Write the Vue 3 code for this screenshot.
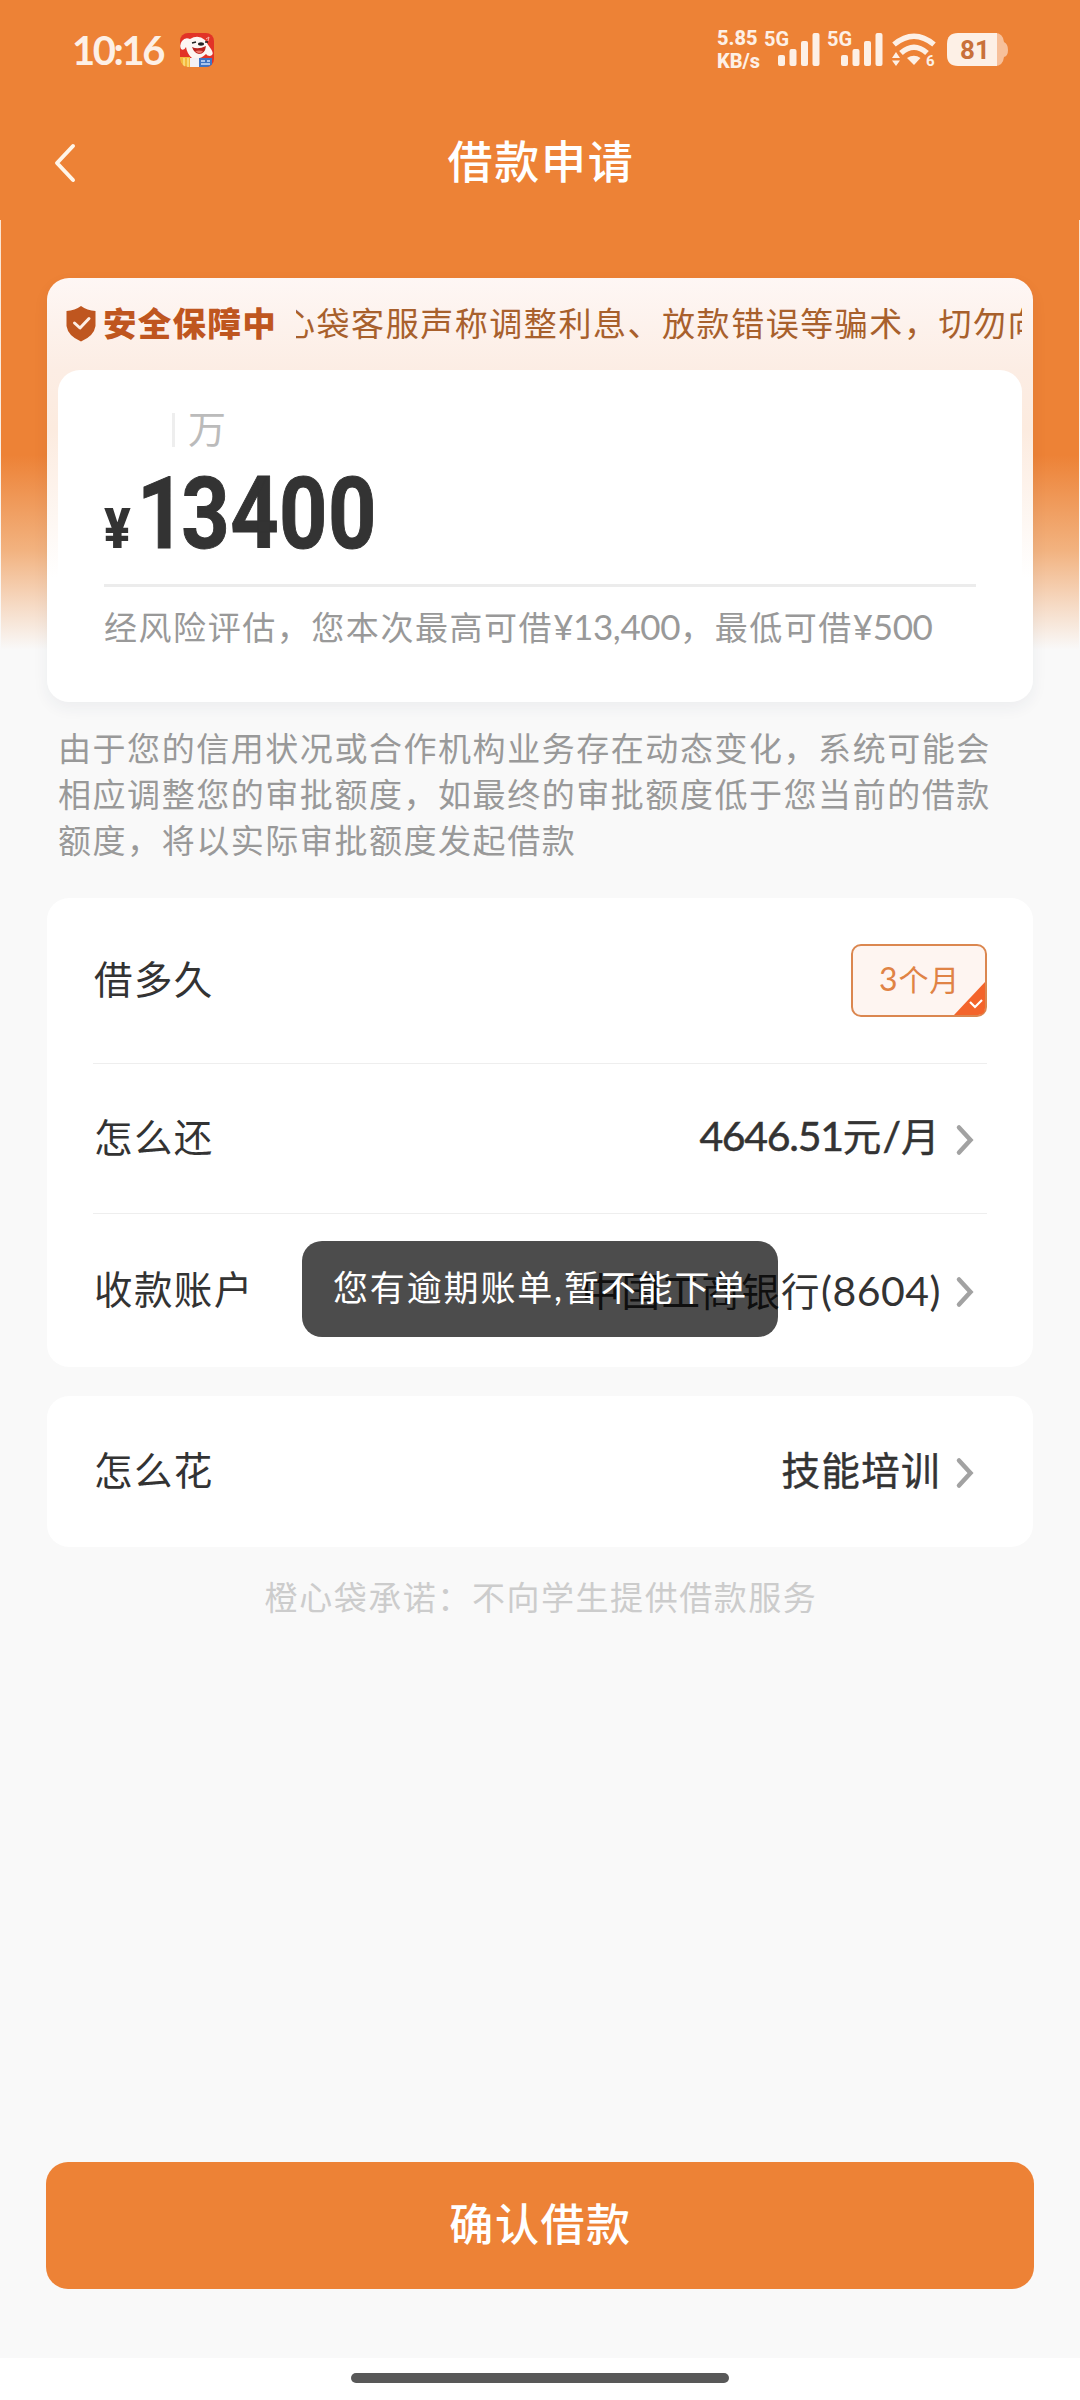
<script setup>
const notice = '心袋客服声称调整利息、放款错误等骗术，切勿向'
const disclaimer = [
  '由于您的信用状况或合作机构业务存在动态变化，系统可能会',
  '相应调整您的审批额度，如最终的审批额度低于您当前的借款',
  '额度，将以实际审批额度发起借款',
]
</script>

<template>
  <div class="page">
    <header class="top">
      <div class="status">
        <span class="clock">10:16</span>
        <svg class="app" width="34" height="34" viewBox="0 0 34 34">
          <defs><clipPath id="appClip"><rect width="34" height="34" rx="8" /></clipPath></defs>
          <g clip-path="url(#appClip)">
            <rect width="34" height="34" fill="#e23327" />
            <path d="M2 8Q5 4 10 6Q18 1 25 7Q28 12 31 16Q35 22 30 23Q27 23 26 21Q20 27 12 25Q7 21 6 14Q4 18 1 16Q-1 12 2 8Z" fill="#fdf6f3" />
            <path d="M12 14Q18 17 26 13Q25 21 19 21Q14 20 12 14Z" fill="#b8231f" />
            <path d="M15 18Q19 17 23 18Q21 21 18 20Z" fill="#ee7668" />
            <ellipse cx="21" cy="11" rx="3" ry="1.7" fill="#222" />
            <path d="M12 10l4-1M25 9l3 0" stroke="#222" stroke-width="1.5" />
            <path d="M26 6l3-2-1 4" stroke="#f5b5a8" fill="none" />
            <rect y="24" width="10" height="10" fill="#f4b93c" />
            <path d="M4 25v9M8 25v9" stroke="#fbe08a" stroke-width="1.5" />
            <rect x="10" y="25" width="9" height="9" fill="#f4f1f5" />
            <rect x="19" y="25" width="13" height="9" fill="#3f74c4" />
            <path d="M21 28h4M27 28h3M21 31h9" stroke="#cfe0fa" stroke-width="1.5" />
          </g>
        </svg>
        <span class="grow"></span>
        <span class="speed"><b>5.85</b><b>KB/s</b></span>
        <span v-for="n in 2" :key="n" class="signal">
          <b>5G</b>
          <svg width="42" height="34" viewBox="0 0 42 34" fill="#fdf0e6">
            <rect x="0" y="22" width="7" height="11" rx="2" />
            <rect x="11.5" y="16" width="7" height="17" rx="2" />
            <rect x="23" y="8" width="7" height="25" rx="2" />
            <rect x="34.5" y="0" width="7" height="33" rx="2" />
          </svg>
        </span>
        <svg class="wifi" width="46" height="34" viewBox="0 0 46 34">
          <g fill="none" stroke="#fdf0e6" stroke-width="5.5">
            <path d="M3 11.5Q23-5 43 11.5" />
            <path d="M10 20Q23 8.500 36 20" />
          </g>
          <path d="M16 25Q23 20.500 29.500 25L23 32Z" fill="#fdf0e6" />
          <path d="M1 25L5 19L9 25ZM1 27.500L5 33L9 27.500Z" fill="#fdf0e6" />
          <text x="35" y="33" class="wifi-six">6</text>
        </svg>
        <svg class="battery" width="61" height="34" viewBox="0 0 61 34">
          <path d="M48 0Q56 0 57 9Q61 11 61 17Q61 23 57 24Q56 33 48 33Z" fill="#f7c09a" />
          <path d="M11 0H50V33H11Q0 33 0 22V11Q0 0 11 0Z" fill="#fdf0e6" />
          <text x="28" y="26" text-anchor="middle" class="level">81</text>
        </svg>
      </div>
      <div class="nav">
        <svg class="back" width="26" height="42" viewBox="0 0 26 42"><path d="M22 4L6 21L22 38" fill="none" stroke="#fff6ea" stroke-width="4" stroke-linecap="round" stroke-linejoin="round" /></svg>
        <h1>借款申请</h1>
      </div>
    </header>

    <main class="body">
      <section class="amount">
        <div class="notice">
          <svg width="30" height="36" viewBox="0 0 30 36"><path d="M15 0Q21 4.500 29.500 5V20Q28 30 15 35.500Q2 30 .5 20V5Q9 4.500 15 0Z" fill="#bf561f" /><path d="M8.500 17L14 22L23 12.500" fill="none" stroke="#fdeee4" stroke-width="3" stroke-linecap="round" stroke-linejoin="round" /></svg>
          <strong>安全保障中</strong>
          <div class="marquee"><span>{{ notice }}</span></div>
        </div>
        <div class="inner">
          <div class="unit"><i></i><span>万</span></div>
          <div class="money"><span class="yen">¥</span><span class="num"><span class="one">1</span>3400</span></div>
          <p class="hint">经风险评估，您本次最高可借<em>¥13,400</em>，最低可借<em>¥500</em></p>
        </div>
      </section>

      <p class="disclaimer"><span v-for="line in disclaimer" :key="line">{{ line }}</span></p>

      <section class="card">
        <div class="row first">
          <span class="label">借多久</span>
          <span class="tag"><em>3</em>个月
            <svg width="31" height="33" viewBox="0 0 31 33"><path d="M0 33L31 0V26Q31 33 24 33Z" fill="#f3642b" /><path d="M16 20L21 25L28 18" fill="none" stroke="#fff" stroke-width="2.200" /></svg>
          </span>
        </div>
        <div class="row second">
          <span class="label">怎么还</span>
          <span class="value"><em class="rate">4646.51</em>元<em>/</em>月</span>
          <svg class="chev" width="20" height="32" viewBox="0 0 20 32"><path d="M4 3.500L15.500 16L4 28.500" /></svg>
        </div>
        <div class="row third">
          <span class="label">收款账户</span>
          <span class="value bank">中国工商银行<em>(8604)</em></span>
          <svg class="chev" width="20" height="32" viewBox="0 0 20 32"><path d="M4 3.500L15.500 16L4 28.500" /></svg>
        </div>
      </section>

      <section class="card use">
        <div class="row fourth">
          <span class="label">怎么花</span>
          <span class="value">技能培训</span>
          <svg class="chev low" width="20" height="32" viewBox="0 0 20 32"><path d="M4 3.500L15.500 16L4 28.500" /></svg>
        </div>
      </section>

      <p class="promise">橙心袋承诺：不向学生提供借款服务</p>
    </main>

    <footer>
      <button><span>确认借款</span></button>
      <div class="home"><i></i></div>
    </footer>

    <div class="toast">您有逾期账单<em>,</em>暂不能下单</div>
  </div>
</template>

<style>
html, body { margin: 0; }
</style>

<style scoped>
* { box-sizing: border-box; }
.page {
  position: relative;
  width: 1080px;
  height: 2400px;
  display: flex;
  flex-direction: column;
  overflow: hidden;
  background: #f9f9f9;
  font-family: "Noto Sans CJK SC", sans-serif;
  color: #333;
}
em, i { font-style: normal; }
em { font-family: Lato, sans-serif; }
p, h1 { margin: 0; }
svg { flex: none; display: block; }

.top { height: 220px; background: #ed8236; }
.status {
  height: 100px;
  display: flex;
  align-items: center;
  padding: 0 72px 0 72px;
  color: #fdf0e6;
}
.clock { width: 108px; font: 700 40px/50px Lato, sans-serif; letter-spacing: -2.400px; }
.grow { flex: 1; }
.speed {
  display: flex;
  flex-direction: column;
  width: 47px;
  font: 800 20px/23px Roboto, sans-serif;
}
.speed b { font-weight: 800; }
.signal { display: flex; width: 63px; height: 38px; }
.signal b { width: 14px; white-space: nowrap; font: 700 20px/17px Roboto, sans-serif; }
.signal svg { margin-top: 2px; }
.wifi { margin-left: 1px; }
.wifi-six { font: 700 15px Roboto, sans-serif; fill: #fdf0e6; }
.battery { margin-left: 10px; }
.level { font: 700 26px Roboto, sans-serif; fill: #c9713a; }

.nav {
  height: 120px;
  display: grid;
  grid-template-columns: 100px 1fr 100px;
  align-items: center;
}
.back { margin: 6px 0 0 51px; }
h1 {
  text-align: center;
  margin-bottom: 1px;
  color: #fff;
  font-size: 45px;
  font-weight: 500;
  line-height: 60px;
  letter-spacing: 1.700px;
  padding-left: 2px;
}

.body {
  height: 1890px;
  padding: 58px 47px 0 47px;
  background:
    linear-gradient(#fbe3cf, #f9f9f9) 0 0 / 1px 430px no-repeat,
    linear-gradient(#fbe3cf, #f9f9f9) 100% 0 / 1px 430px no-repeat,
    linear-gradient(#ed8236 0, #ed8236 235px, #f2b27f 330px, #f6dac4 385px, #f9f9f9 430px);
}
.amount {
  height: 424px;
  border-radius: 22px;
  background: linear-gradient(#fef7f5 0, #fcede4 92px, #fcebdf 150px, #fff 300px);
  box-shadow: 0 6px 16px rgba(40, 50, 80, .06);
}
.notice {
  height: 92px;
  display: flex;
  align-items: center;
  padding: 0 11px 0 19px;
  color: #a8602c;
}
.notice > svg { margin-right: 7px; }
.notice strong {
  width: 193px;
  margin-bottom: 4px;
  font-size: 33.500px;
  line-height: 48px;
  font-weight: 900;
  letter-spacing: 1.300px;
  color: #bf561f;
}
.marquee { flex: 1; overflow: hidden; white-space: nowrap; margin-bottom: 4px; }
.marquee span {
  margin-left: -14px;
  font-size: 33px;
  line-height: 48px;
  letter-spacing: 1.550px;
}
.inner {
  margin: 0 11px;
  height: 332px;
  border-radius: 22px;
  background: #fff;
  padding: 34px 46px 0;
}
.unit { height: 44px; display: flex; align-items: center; padding-left: 68px; color: #bbb; font-size: 38px; }
.unit i { width: 3px; height: 34px; margin: 8px 13px 0 0; background: #eee; }
.money {
  display: flex;
  align-items: baseline;
  height: 139px;
  border-bottom: 3px solid #ececec;
  font-family: Roboto, sans-serif;
  font-weight: 700;
  line-height: 132px;
}
.yen { width: 33px; font-size: 55px; font-weight: 900; transform: scaleX(.9); transform-origin: 0 50%; }
.num { font-size: 100px; transform: scaleX(.845); transform-origin: 0 50%; letter-spacing: .5px; -webkit-text-stroke: 1px currentColor; }
.one { letter-spacing: -5px; }
.hint { margin-top: 14px; color: #999; font-size: 33px; line-height: 50px; letter-spacing: 1.550px; white-space: nowrap; }
.hint em { letter-spacing: -.4px; font-size: 35px; }

.disclaimer {
  height: 196px;
  padding: 22px 0 0 11px;
  display: flex;
  flex-direction: column;
  color: #999;
  font-size: 33px;
  line-height: 46px;
  letter-spacing: 1.550px;
  white-space: nowrap;
}
.card { border-radius: 22px; background: #fff; padding: 0 46px; }
.row { display: flex; align-items: center; border-bottom: 1px solid #eee; }
.first { height: 166px; }
.second { height: 150px; }
.third { height: 153px; border: 0; }
.use { margin-top: 29px; }
.fourth { height: 151px; border: 0; }
.label { flex: 1; padding: 0 0 8px 1px; font-size: 38.500px; line-height: 56px; letter-spacing: 1.400px; }
.value {
  font-size: 38.500px;
  line-height: 56px;
  letter-spacing: 1.400px;
  margin: 0 14px 7px 0;
  white-space: nowrap;
  -webkit-text-stroke: .5px currentColor;
}
.value em { font-size: 41px; letter-spacing: 0; }
.value .rate { letter-spacing: -1.300px; }
.bank { margin-bottom: 2px; -webkit-text-stroke-width: 0; }
.bank em { letter-spacing: .5px; }
.chev { margin: 3px 12px 0 0; }
.chev path { fill: none; stroke: #a2a2a2; stroke-width: 4.500; stroke-linecap: round; }
.tag {
  position: relative;
  width: 136px;
  height: 73px;
  border: 2px solid #db8750;
  border-radius: 10px;
  background: #fef5f1;
  color: #e08345;
  font-size: 30px;
  line-height: 65px;
  padding-left: 26px;
  white-space: nowrap;
  letter-spacing: .8px;
}
.tag em { font-size: 32px; }
.tag svg { position: absolute; right: 0; bottom: 0; }
.promise { margin-top: 25px; padding-left: 2px; text-align: center; font-size: 33px; line-height: 48px; letter-spacing: 1.550px; color: #ccc; }

footer { flex: 1; display: flex; flex-direction: column; }
button {
  margin: 52px 46px 0;
  height: 127px;
  flex: none;
  border: 0;
  border-radius: 22px;
  padding: 0 0 7px 1px;
  background: #ed8236;
  color: #fff;
  font: 500 44px/60px "Noto Sans CJK SC", sans-serif;
  letter-spacing: 1.600px;
}
.home { margin-top: 69px; flex: 1; background: #fff; display: flex; justify-content: center; padding-top: 15px; }
.home i { width: 378px; height: 10px; border-radius: 5px; background: #585858; }
.toast {
  position: absolute;
  left: 302px;
  top: 1241px;
  width: 476px;
  height: 96px;
  padding-left: 31px;
  border-radius: 20px;
  background: rgba(0, 0, 0, .7);
  color: #fff;
  font-size: 35px;
  line-height: 90px;
  letter-spacing: 1.850px;
  white-space: nowrap;
}
</style>
